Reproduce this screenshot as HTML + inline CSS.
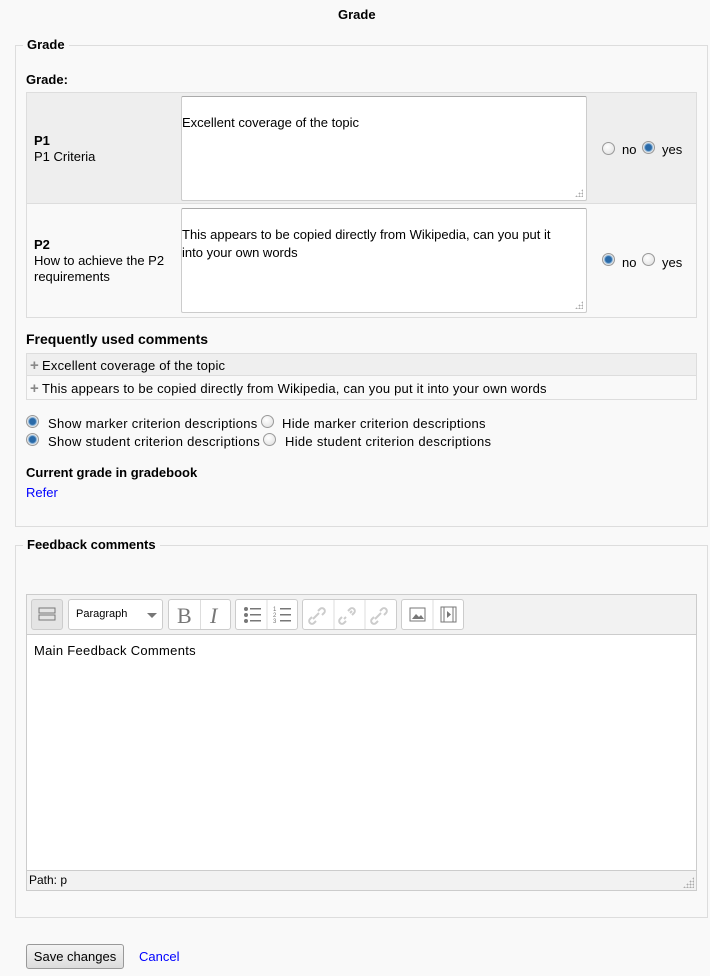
<!DOCTYPE html>
<html><head><meta charset="utf-8"><style>
*{box-sizing:border-box}
body{margin:0;width:710px;height:976px;background:#f9f9f9;font-family:"Liberation Sans",Arial,sans-serif;font-size:13px;color:#000;position:relative;overflow:hidden}
.a{position:absolute;white-space:nowrap}
.b{font-weight:bold}
.fs{position:absolute;border:1px solid #ddd}
.leg{position:absolute;background:#f9f9f9;padding:0 4px;font-weight:bold}
.ta{position:absolute;background:#fff;border:1px solid #ccc;border-top-color:#aaa;border-radius:2px;padding:20px 0 0 0;line-height:18px;white-space:nowrap}
.r{position:absolute;width:13px;height:13px;border-radius:50%;border:1px solid #999;background:radial-gradient(circle at 40% 35%,#fff,#ddd)}
.r.on{background:radial-gradient(circle,#2a6aa8 0 3px,#8fb8dc 4px,#e8e8e8 5px)}
.btn{position:absolute;top:599px;height:31px;border:1px solid #ccc;border-radius:3px;background:#fff}
.blue{color:#00f}
.pl{display:inline-block;width:12px;color:#888;font-weight:bold;font-size:15px}
.grip{position:absolute;right:3px;bottom:3px;width:8px;height:8px;background:radial-gradient(circle,#aaa 0.8px,transparent 1px) 0 0/3px 3px;clip-path:polygon(100% 0,100% 100%,0 100%)}
</style></head><body>
<div class="a b" style="left:338px;top:7px">Grade</div>

<div class="fs" style="left:15px;top:45px;width:693px;height:482px"></div>
<div class="leg" style="left:23px;top:37px">Grade</div>
<div class="a b" style="left:26px;top:72px">Grade:</div>

<div class="a" style="left:26px;top:92px;width:671px;height:226px;border:1px solid #ddd"></div>
<div class="a" style="left:27px;top:93px;width:669px;height:111px;background:#eee;border-bottom:1px solid #ddd"></div>
<div class="a b" style="left:34px;top:133px">P1</div>
<div class="a" style="left:34px;top:149px">P1 Criteria</div>
<div class="ta" style="left:181px;top:96px;width:406px;height:105px;padding-top:17px">Excellent coverage of the topic<div class="grip"></div></div>
<div class="r" style="left:602px;top:142px"></div><div class="a" style="left:622px;top:142px">no</div>
<div class="r on" style="left:642px;top:141px"></div><div class="a" style="left:662px;top:142px">yes</div>

<div class="a b" style="left:34px;top:237px">P2</div>
<div class="a" style="left:34px;top:253px">How to achieve the P2</div>
<div class="a" style="left:34px;top:269px">requirements</div>
<div class="ta" style="left:181px;top:208px;width:406px;height:105px;padding-top:17px">This appears to be copied directly from Wikipedia, can you put it<br>into your own words<div class="grip"></div></div>
<div class="r on" style="left:602px;top:253px"></div><div class="a" style="left:622px;top:255px">no</div>
<div class="r" style="left:642px;top:253px"></div><div class="a" style="left:662px;top:255px">yes</div>

<div class="a b" style="left:26px;top:331px;font-size:14px">Frequently used comments</div>
<div class="a" style="left:26px;top:353px;width:671px;height:47px;border:1px solid #ddd"></div>
<div class="a" style="left:27px;top:354px;width:669px;height:22px;background:#efefef;border-bottom:1px solid #ddd"></div>
<div class="a" style="left:30px;top:357px;letter-spacing:0.2px"><span class="pl">+</span>Excellent coverage of the topic</div>
<div class="a" style="left:30px;top:380px;letter-spacing:0.2px"><span class="pl">+</span>This appears to be copied directly from Wikipedia, can you put it into your own words</div>

<div class="r on" style="left:26px;top:415px"></div><div class="a" style="left:48px;top:416px;letter-spacing:0.3px">Show marker criterion descriptions</div>
<div class="r" style="left:261px;top:415px"></div><div class="a" style="left:282px;top:416px;letter-spacing:0.3px">Hide marker criterion descriptions</div>
<div class="r on" style="left:26px;top:433px"></div><div class="a" style="left:48px;top:434px;letter-spacing:0.3px">Show student criterion descriptions</div>
<div class="r" style="left:263px;top:433px"></div><div class="a" style="left:285px;top:434px;letter-spacing:0.3px">Hide student criterion descriptions</div>

<div class="a b" style="left:26px;top:465px">Current grade in gradebook</div>
<div class="a blue" style="left:26px;top:485px">Refer</div>

<div class="fs" style="left:15px;top:545px;width:693px;height:373px"></div>
<div class="leg" style="left:23px;top:537px">Feedback comments</div>

<div class="a" style="left:26px;top:594px;width:671px;height:297px;border:1px solid #ccc;background:#fff"></div>
<div class="a" style="left:27px;top:595px;width:669px;height:40px;background:#f2f2f2;border-bottom:1px solid #ccc"></div>
<div class="btn" style="left:31px;width:32px;background:#e4e4e4"><svg width="30" height="29"><g fill="none" stroke="#777"><rect x="7" y="8" width="16" height="5"/><rect x="7" y="15" width="16" height="5"/></g></svg></div>
<div class="btn" style="left:68px;width:95px"><span class="a" style="left:7px;top:8px;font-size:11px">Paragraph</span><span class="a" style="left:78px;top:13px;border:5px solid transparent;border-top-color:#777"></span></div>
<div class="btn" style="left:168px;width:63px"><span class="a" style="left:8px;top:3px;font:22px 'Liberation Serif',serif;color:#777">B</span><span class="a" style="left:31px;top:0;width:1px;height:29px;background:#ddd"></span><span class="a" style="left:41px;top:3px;font:italic 22px 'Liberation Serif',serif;color:#777">I</span></div>
<div class="btn" style="left:235px;width:63px"><svg width="62" height="29"><g fill="#777"><circle cx="10" cy="9" r="2"/><circle cx="10" cy="15" r="2"/><circle cx="10" cy="21" r="2"/><rect x="14" y="8" width="11" height="1.5"/><rect x="14" y="14" width="11" height="1.5"/><rect x="14" y="20" width="11" height="1.5"/><rect x="44" y="8" width="11" height="1.5"/><rect x="44" y="14" width="11" height="1.5"/><rect x="44" y="20" width="11" height="1.5"/></g><line x1="31" y1="0" x2="31" y2="29" stroke="#ddd"/><text x="37" y="11" font-size="6" fill="#777">1</text><text x="37" y="17" font-size="6" fill="#777">2</text><text x="37" y="23" font-size="6" fill="#777">3</text></svg></div>
<div class="btn" style="left:302px;width:95px"><svg width="94" height="29"><g fill="none" stroke="#ccc" stroke-width="2"><path d="M10 19l6-6m-3 8l-2 2a2.5 2.5 0 0 1-4-4l2-2m6-6l2-2a2.5 2.5 0 0 1 4 4l-2 2"/><path d="M41 19l2-2m4-4l2-2m-6 10l-2 2a2.5 2.5 0 0 1-4-4l2-2m6-6l2-2a2.5 2.5 0 0 1 4 4l-2 2"/><path d="M72 19l6-6m-3 8l-2 2a2.5 2.5 0 0 1-4-4l2-2m6-6l2-2a2.5 2.5 0 0 1 4 4l-2 2"/></g><line x1="31" y1="0" x2="31" y2="29" stroke="#ddd"/><line x1="62" y1="0" x2="62" y2="29" stroke="#ddd"/></svg></div>
<div class="btn" style="left:401px;width:63px"><svg width="62" height="29"><rect x="8" y="8" width="15" height="13" fill="none" stroke="#777"/><path d="M10 19l4-5 3 3 2-2 3 4z" fill="#777"/><line x1="31" y1="0" x2="31" y2="29" stroke="#ddd"/><rect x="39" y="7" width="15" height="15" fill="none" stroke="#777"/><line x1="42" y1="7" x2="42" y2="22" stroke="#777"/><line x1="51" y1="7" x2="51" y2="22" stroke="#777"/><path d="M45 11l4 3.5-4 3.5z" fill="#777"/></svg></div>
<div class="a" style="left:34px;top:643px;letter-spacing:0.3px">Main Feedback Comments</div>
<div class="a" style="left:27px;top:870px;width:669px;height:20px;background:#f2f2f2;border-top:1px solid #ccc"><div class="grip" style="right:2px;bottom:2px;width:11px;height:11px"></div></div>
<div class="a" style="left:29px;top:873px;font-size:12px">Path: p</div>

<div class="a" style="left:26px;top:944px;width:98px;height:25px;border:1px solid #999;border-radius:3px;background:linear-gradient(#f4f4f4,#dcdcdc);text-align:center;line-height:23px">Save changes</div>
<div class="a blue" style="left:139px;top:949px">Cancel</div>
</body></html>
